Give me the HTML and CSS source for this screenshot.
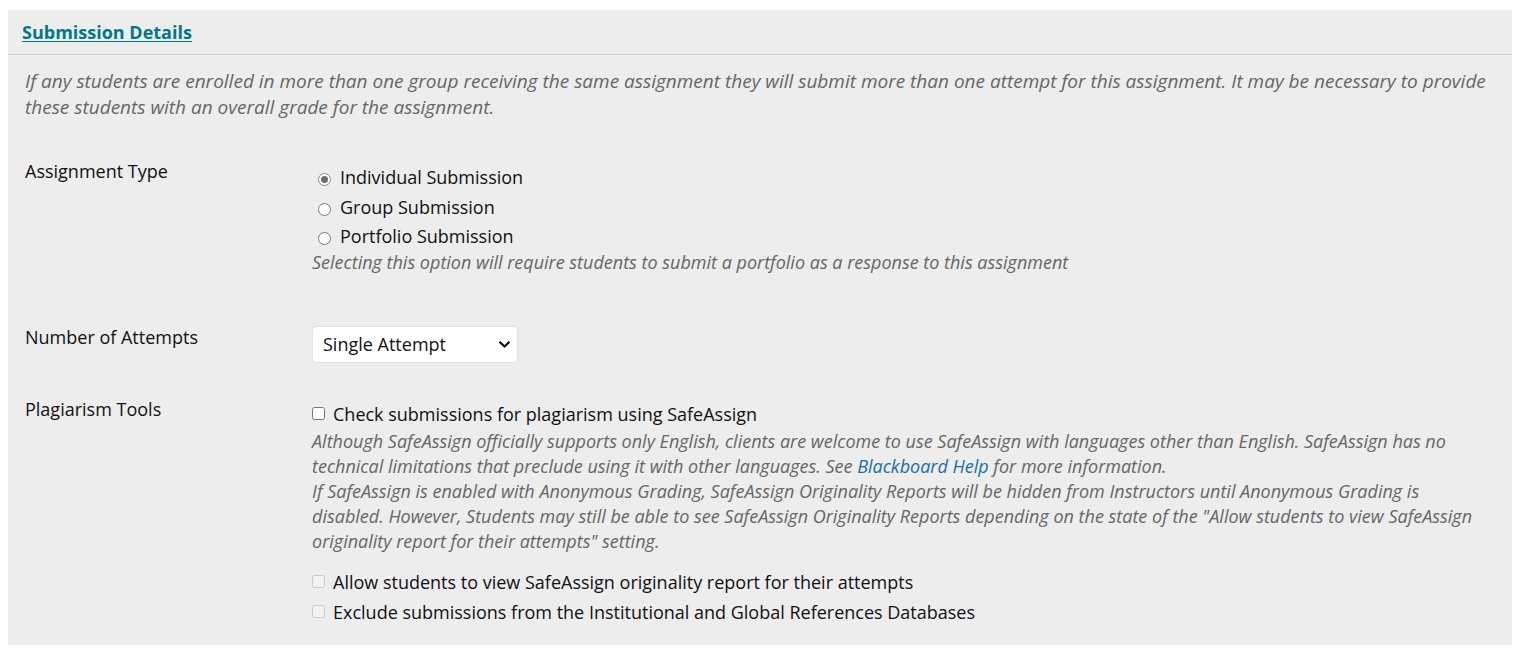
FILE: index.html
```html
<!DOCTYPE html>
<html>
<head>
<meta charset="utf-8">
<link rel="stylesheet" href="styles.css">
</head>
<body>
<div class="panel">
  <div class="panel-head"><a class="title" href="#">Submission Details</a></div>
  <p class="intro">If any students are enrolled in more than one group receiving the same assignment they will submit more than one attempt for this assignment. It may be necessary to provide these students with an overall grade for the assignment.</p>
  <div class="row row-type">
    <div class="label">Assignment Type</div>
    <div class="field">
      <label class="opt"><input type="radio" name="t" checked> Individual Submission</label>
      <label class="opt"><input type="radio" name="t"> Group Submission</label>
      <label class="opt"><input type="radio" name="t"> Portfolio Submission</label>
      <div class="hint hint-radio">Selecting this option will require students to submit a portfolio as a response to this assignment</div>
    </div>
  </div>
  <div class="row row-attempts">
    <div class="label">Number of Attempts</div>
    <div class="field">
      <div class="select"><span>Single Attempt</span><svg width="13" height="9" viewBox="0 0 13 9"><path d="M1.5 1.8 L6.5 6.6 L11.5 1.8" fill="none" stroke="#111" stroke-width="2.2"/></svg></div>
    </div>
  </div>
  <div class="row row-plag">
    <div class="label">Plagiarism Tools</div>
    <div class="field">
      <label class="chk"><input type="checkbox"> Check submissions for plagiarism using SafeAssign</label>
      <div class="hint hint-plag">Although SafeAssign officially supports only English, clients are welcome to use SafeAssign with languages other than English. SafeAssign has no technical limitations that preclude using it with other languages. See <a href="#" class="help">Blackboard Help</a> for more information.<br>If SafeAssign is enabled with Anonymous Grading, SafeAssign Originality Reports will be hidden from Instructors until Anonymous Grading is disabled. However, Students may still be able to see SafeAssign Originality Reports depending on the state of the "Allow students to view SafeAssign originality report for their attempts" setting.</div>
      <div class="subs">
        <label class="chk"><input type="checkbox" disabled> Allow students to view SafeAssign originality report for their attempts</label>
        <label class="chk"><input type="checkbox" disabled> Exclude submissions from the Institutional and Global References Databases</label>
      </div>
    </div>
  </div>
</div>
</body>
</html>
```

FILE: styles.css
```css
html, body { margin: 0; padding: 0; background: #fff; }
body { padding: 10px 16px 0 8px; font-family: "Open Sans", "Liberation Sans", sans-serif; font-size: 18px; color: #111; }
.panel { background: #ededed; padding-bottom: 18px; }
.panel-head { height: 44px; border-bottom: 1px solid #cfcfcf; display: flex; align-items: center; padding-left: 14px; }
.title { color: #00788a; font-weight: 700; font-size: 18px; text-decoration: underline; text-underline-offset: 2px; }
.intro { margin: 0; padding: 13px 17px 0 17px; font-style: italic; color: #666; font-size: 19px; line-height: 26px; }
.row { display: grid; grid-template-columns: 287px 1fr; padding: 0 17px; }
.label { line-height: 26px; }
.row-type { margin-top: 38px; }
.row-attempts { margin-top: 49px; }
.row-plag { margin-top: 33px; }
.field { display: flex; flex-direction: column; align-items: flex-start; }
.row-type .field { padding-top: 5px; }
.opt { display: flex; align-items: center; line-height: 29.5px; }
.opt input { appearance: none; -webkit-appearance: none; margin: 4px 9px 0 6px; width: 13px; height: 13px; border: 1px solid #767676; border-radius: 50%; background: #fff; box-sizing: border-box; display: grid; place-items: center; }
.opt input:checked { border-color: #8a8a8a; background: #fff; }
.opt input:checked::after { content: ""; width: 7px; height: 7px; border-radius: 50%; background: #6f6f6f; }
.hint { font-style: italic; color: #666; line-height: 25px; }
.hint-radio { margin-top: -2px; }
.hint-plag { margin-top: 2px; }
.select { margin-top: 2px; width: 206px; height: 37px; box-sizing: border-box; background: #fff; border: 1px solid #e2e2e2; border-radius: 4px; display: flex; align-items: center; justify-content: space-between; padding: 0 6px 0 10px; }
.row-plag .field { padding-top: 5px; }
.chk { display: flex; align-items: center; line-height: 26px; }
.chk input { margin: 0 8px 0 0; width: 13px; height: 13px; }
.subs { margin-top: 13px; display: flex; flex-direction: column; }
.subs .chk { line-height: 30px; }
.help { color: #1b6ea5; text-decoration: none; }
```
